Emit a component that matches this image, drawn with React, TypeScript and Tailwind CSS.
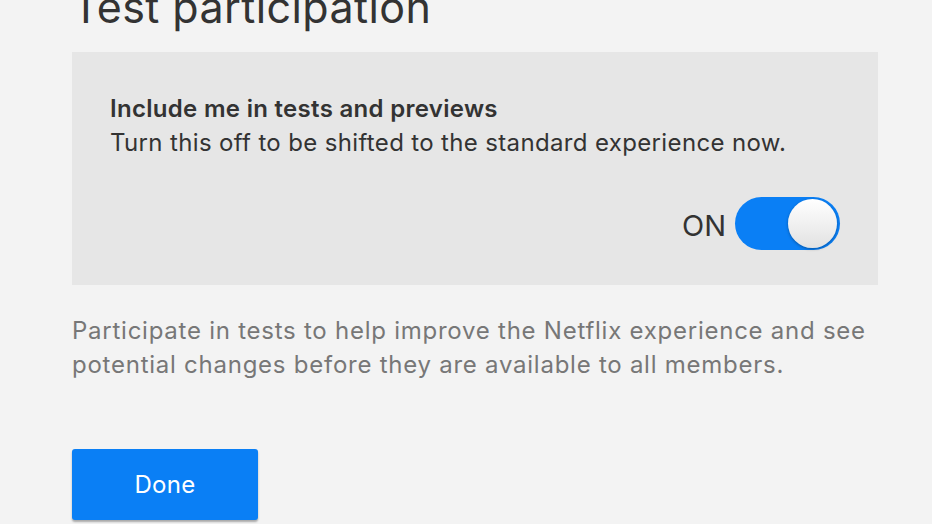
export default function App() {
  return (
    <main
      className="min-h-screen w-full overflow-hidden bg-[#f3f3f3] px-[72px]"
      style={{ fontFamily: "Inter, 'Noto Sans', sans-serif" }}
    >
      <h1 className="mt-[-14px] text-[43px] leading-[43px] font-normal text-[#333333] tracking-[0.4px]">
        Test participation
      </h1>

      <section className="mt-[23px] w-[806px] bg-[#e6e6e6] pt-[40px] pb-[35px] pl-[38px] pr-[38px]">
        <h2 className="text-[24px] leading-[34px] font-semibold text-[#333333] tracking-[0.3px]">
          Include me in tests and previews
        </h2>
        <p className="text-[24px] leading-[34px] text-[#333333] tracking-[0.35px]">
          Turn this off to be shifted to the standard experience now.
        </p>
        <div className="mt-[37px] flex items-center justify-end gap-[9px]">
          <span className="pt-[4px] text-[29px] leading-none text-[#333333]">ON</span>
          <button className="relative h-[53px] w-[105px] rounded-full bg-[#0a7ff5]">
            <span className="absolute right-[3px] top-[2px] h-[49px] w-[49px] rounded-full bg-gradient-to-b from-[#ffffff] to-[#e2e2e2] shadow-[0_1px_3px_rgba(0,0,0,0.35)]" />
          </button>
        </div>
      </section>

      <p className="mt-[29px] w-[820px] text-[24px] leading-[34px] text-[#777777] tracking-[0.75px]">
        Participate in tests to help improve the Netflix experience and see
        potential changes before they are available to all members.
      </p>

      <button className="mt-[67px] h-[71px] w-[186px] rounded-[3px] bg-[#0a7ff5] text-[24px] text-white tracking-[0.3px] shadow-[0_2px_2px_rgba(0,0,0,0.3)]">
        Done
      </button>
    </main>
  );
}
